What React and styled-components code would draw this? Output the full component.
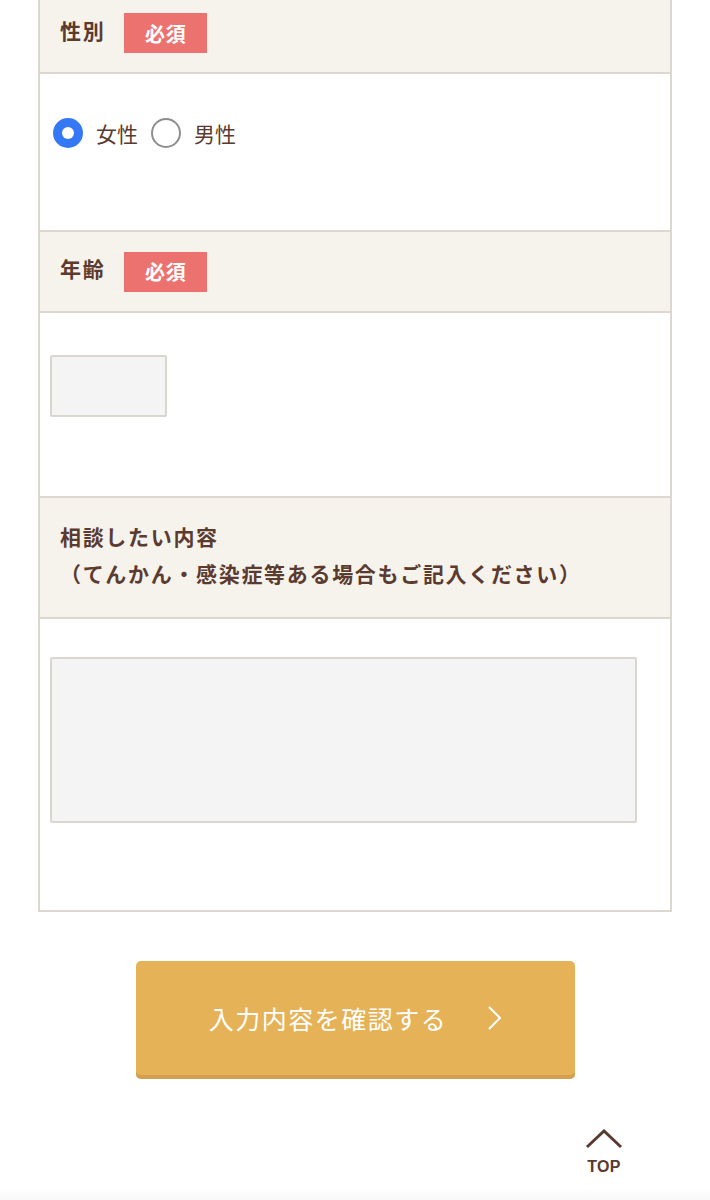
import React from "react";
import styled, { createGlobalStyle } from "styled-components";

const Global = createGlobalStyle`
  html, body { margin: 0; padding: 0; background: #fff; }
  body {
    font-family: "Noto Sans CJK JP", "Noto Sans", sans-serif;
    color: #5b3a2f;
    overflow: hidden;
  }
  * { box-sizing: border-box; }
`;

const Page = styled.div`
  width: 710px;
  height: 1200px;
  display: flex;
  flex-direction: column;
  align-items: center;
  overflow: hidden;
`;

const FormTable = styled.div`
  width: 634px;
  margin-top: -6px;
  border-left: 2px solid #dcd7d0;
  border-right: 2px solid #dcd7d0;
  display: flex;
  flex-direction: column;
`;

const Head = styled.div`
  min-height: ${(p) => p.$h}px;
  background: #f6f2ec;
  border-bottom: 2px solid #dcd7d0;
  display: flex;
  align-items: center;
  gap: 19px;
  padding: ${(p) => (p.$multi ? "0 20px 5px" : "0 20px 6px")};
`;

const Label = styled.div`
  font-size: 21px;
  font-weight: 700;
  line-height: 37px;
  letter-spacing: 0.08em;
  color: #5b3a2f;
`;

const Badge = styled.span`
  display: inline-flex;
  align-items: center;
  justify-content: center;
  width: 83px;
  height: 40px;
  margin-top: 6px;
  background: #ec7270;
  color: #fff;
  font-size: 20px;
  font-weight: 700;
  letter-spacing: 0.05em;
`;

const Body = styled.div`
  height: ${(p) => p.$h}px;
  padding: ${(p) => p.$pt}px 10px 0;
  border-bottom: 2px solid #dcd7d0;
  background: #fff;
`;

const RadioRow = styled.div`
  display: flex;
  align-items: center;
  height: 30px;
  padding-left: 3px;
`;

const RadioOption = styled.label`
  display: flex;
  align-items: center;
  gap: 13px;
  margin-right: 13px;
  font-size: 21px;
  color: #5b3a2f;
`;

const RadioDot = styled.span`
  width: 30px;
  height: 30px;
  border-radius: 50%;
  flex-shrink: 0;
  ${(p) =>
    p.$checked
      ? `background: #3478f6; border: 0; position: relative;
         &::after { content: ""; position: absolute; left: 9px; top: 9px; width: 12px; height: 12px; border-radius: 50%; background: #fff; }`
      : `border: 2.5px solid #8e8e8e; background: #fff;`}
`;

const SmallInput = styled.div`
  width: 117px;
  height: 62px;
  background: #f4f4f4;
  border: 2px solid #d9d5cf;
  border-radius: 2px;
`;

const TextArea = styled.div`
  width: 587px;
  height: 166px;
  background: #f4f4f4;
  border: 2px solid #d9d5cf;
  border-radius: 2px;
`;

const Submit = styled.button`
  margin-top: 49px;
  width: 439px;
  height: 118px;
  border: 0;
  border-radius: 5px;
  background: #e6b257;
  box-shadow: inset 0 -4px 0 #d49f4e;
  color: #fff;
  font-family: inherit;
  font-size: 25px;
  letter-spacing: 0.06em;
  display: flex;
  align-items: center;
  justify-content: center;
  gap: 40px;
  padding: 0 0 4px 2px;
  cursor: pointer;
`;

const TopLink = styled.div`
  align-self: flex-end;
  margin-right: 87px;
  margin-top: 50px;
  display: flex;
  flex-direction: column;
  align-items: center;
  gap: 8px;
  color: #5b3a2f;
`;

const TopText = styled.span`
  font-family: "Liberation Sans", "Noto Sans", sans-serif;
  font-weight: 700;
  font-size: 16px;
  letter-spacing: 0.02em;
  line-height: 20px;
`;

const Footer = styled.div`
  width: 100%;
  margin-top: 12px;
  flex: 1;
  background: linear-gradient(#fff, #f8f8f8);
`;

export default function App() {
  return (
    <>
      <Global />
      <Page>
        <FormTable>
          <Head $h={80}>
            <Label>性別</Label>
            <Badge>必須</Badge>
          </Head>
          <Body $h={158} $pt={44}>
            <RadioRow>
              <RadioOption>
                <RadioDot $checked />
                女性
              </RadioOption>
              <RadioOption>
                <RadioDot />
                男性
              </RadioOption>
            </RadioRow>
          </Body>
          <Head $h={81}>
            <Label>年齢</Label>
            <Badge>必須</Badge>
          </Head>
          <Body $h={185} $pt={42}>
            <SmallInput />
          </Body>
          <Head $h={121} $multi>
            <Label>
              相談したい内容
              <br />
              （てんかん・感染症等ある場合もご記入ください）
            </Label>
          </Head>
          <Body $h={293} $pt={38}>
            <TextArea />
          </Body>
        </FormTable>
        <Submit>
          入力内容を確認する
          <svg width="16" height="26" viewBox="0 0 16 26" fill="none">
            <path d="M2 2 L13 13 L2 24" stroke="#fff" strokeWidth="2" />
          </svg>
        </Submit>
        <TopLink>
          <svg width="38" height="20" viewBox="0 0 38 20" fill="none">
            <path d="M2 18 L19 2 L36 18" stroke="#5b3a2f" strokeWidth="3" />
          </svg>
          <TopText>TOP</TopText>
        </TopLink>
        <Footer />
      </Page>
    </>
  );
}
